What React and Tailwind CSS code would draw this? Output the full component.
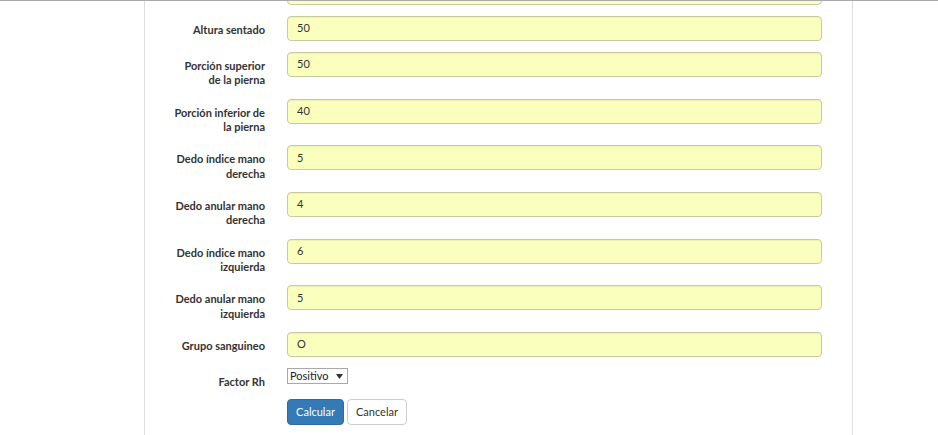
import React from "react";

const rows = [
  { label: "", value: "" },
  { label: "Altura sentado", value: "50" },
  { label: "Porción superior de la pierna", value: "50" },
  { label: "Porción inferior de la pierna", value: "40" },
  { label: "Dedo índice mano derecha", value: "5" },
  { label: "Dedo anular mano derecha", value: "4" },
  { label: "Dedo índice mano izquierda", value: "6" },
  { label: "Dedo anular mano izquierda", value: "5" },
  { label: "Grupo sanguineo", value: "O" },
];

function Row({ label, value }) {
  return (
    <div className="flex mb-[11px]">
      <div className="w-[92px] shrink-0 text-right font-bold text-[11px] leading-[14.35px] pt-[7px] text-[#333]">
        {label}
      </div>
      <div className="ml-[22px] w-[535px]">
        <div className="h-[25px] rounded-[4px] border border-[#c9caa2] bg-[#faffbd] pl-[9px] flex items-center text-[11px] text-[#333] shadow-[inset_0_1px_1px_rgba(0,0,0,0.06)]">
          {value}
        </div>
      </div>
    </div>
  );
}

export default function App() {
  return (
    <div
      className="w-[938px] h-[435px] overflow-hidden bg-white border-t border-[#aaaaaa]"
      style={{ fontFamily: "Lato, 'Noto Sans', sans-serif" }}
    >
      <div className="ml-[144px] w-[709px] h-full border-x border-[#dddddd] flex flex-col">
        <div className="pl-[28px] mt-[-21px]">
          {rows.map((r, i) => (
            <Row key={i} label={r.label} value={r.value} />
          ))}
          <div className="flex mt-[1px] mb-[10px]">
            <div className="w-[92px] shrink-0 text-right font-bold text-[11px] leading-[14.35px] pt-[7px] text-[#333]">
              Factor Rh
            </div>
            <div className="ml-[22px]">
              <div className="w-[61px] h-[16px] border border-[#a9a9a9] bg-white flex items-center justify-between pl-[2px] pr-[4px] text-[11px] text-[#222]">
                <span>Positivo</span>
                <svg width="7" height="5" viewBox="0 0 7 5">
                  <path d="M0 0 L7 0 L3.5 5 Z" fill="#333" />
                </svg>
              </div>
            </div>
          </div>
          <div className="flex">
            <div className="w-[92px] shrink-0" />
            <div className="ml-[22px] flex gap-[3px]">
              <div className="w-[57px] h-[26px] rounded-[4px] bg-[#337ab7] border border-[#2e6da4] text-white text-[11px] flex items-center justify-center">
                Calcular
              </div>
              <div className="w-[60px] h-[26px] rounded-[4px] bg-white border border-[#cccccc] text-[#333] text-[11px] flex items-center justify-center">
                Cancelar
              </div>
            </div>
          </div>
        </div>
      </div>
    </div>
  );
}
